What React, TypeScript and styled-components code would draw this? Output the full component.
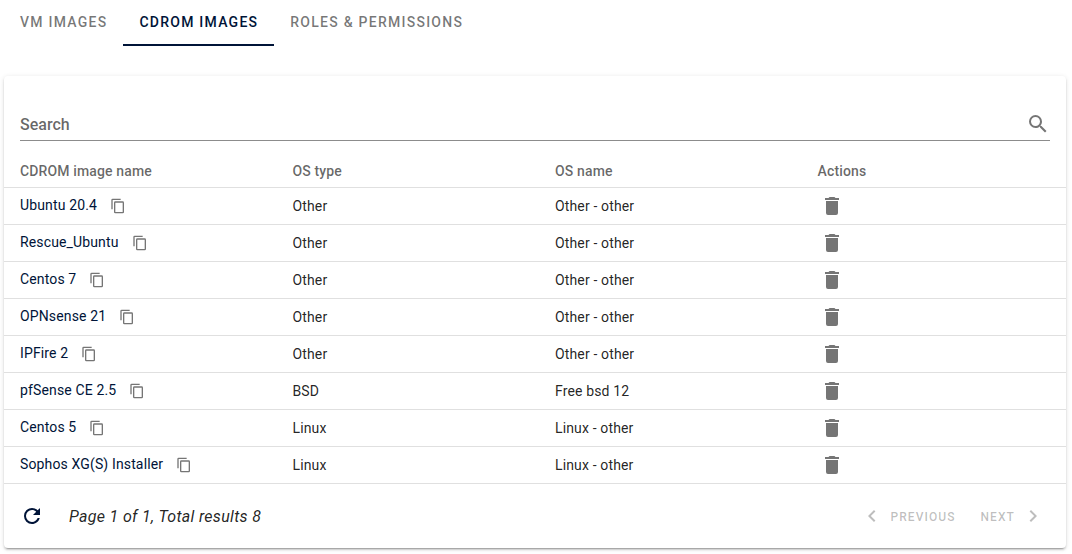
import React, { useState } from "react";
import styled, { createGlobalStyle } from "styled-components";

const navy = "#001438";
const muted = "rgba(0, 0, 0, 0.6)";
const iconGrey = "rgba(0, 0, 0, 0.54)";
const disabled = "rgba(0, 0, 0, 0.26)";

const GlobalStyle = createGlobalStyle`
  *, *::before, *::after { box-sizing: border-box; }
  body {
    margin: 0;
    background: #fff;
    color: rgba(0, 0, 0, 0.87);
    font-family: Roboto, "Liberation Sans", sans-serif;
    font-size: 14px;
    line-height: 20px;
  }
  button, input { font: inherit; color: inherit; }
`;

const paths = {
  search:
    "M9.5,3A6.5,6.5 0 0,1 16,9.5C16,11.11 15.41,12.59 14.44,13.73L14.71,14H15.5L20.5,19L19,20.5L14,15.5V14.71L13.73,14.44C12.59,15.41 11.11,16 9.5,16A6.5,6.5 0 0,1 3,9.5A6.5,6.5 0 0,1 9.5,3M9.5,5C7,5 5,7 5,9.5C5,12 7,14 9.5,14C12,14 14,12 14,9.5C14,7 12,5 9.5,5Z",
  copy: "M19,21H8V7H19M19,5H8A2,2 0 0,0 6,7V21A2,2 0 0,0 8,23H19A2,2 0 0,0 21,21V7A2,2 0 0,0 19,5M16,1H4A2,2 0 0,0 2,3V17H4V3H16V1Z",
  trash:
    "M19,4H15.5L14.5,3H9.5L8.5,4H5V6H19M6,19A2,2 0 0,0 8,21H16A2,2 0 0,0 18,19V7H6V19Z",
  refresh:
    "M17.65,6.35C16.2,4.9 14.21,4 12,4A8,8 0 0,0 4,12A8,8 0 0,0 12,20C15.73,20 18.84,17.45 19.73,14H17.65C16.83,16.33 14.61,18 12,18A6,6 0 0,1 6,12A6,6 0 0,1 12,6C13.66,6 15.14,6.69 16.22,7.78L13,11H20V4L17.65,6.35Z",
  left: "M15.41,16.58L10.83,12L15.41,7.41L14,6L8,12L14,18L15.41,16.58Z",
  right: "M8.59,16.58L13.17,12L8.59,7.41L10,6L16,12L10,18L8.59,16.58Z",
};

const Svg = styled.svg`
  display: block;
  flex: none;
  fill: currentColor;
`;

function Icon({ name, size = 24 }: { name: keyof typeof paths; size?: number }) {
  return (
    <Svg width={size} height={size} viewBox="0 0 24 24" aria-hidden="true">
      <path d={paths[name]} />
    </Svg>
  );
}

const Page = styled.main`
  padding: 0 6px 6px 4px;
`;

const Tabs = styled.div`
  display: flex;
`;

const Tab = styled.button<{ $active: boolean }>`
  height: 46px;
  padding: 0 16px;
  border: 0;
  border-bottom: 2px solid ${(p) => (p.$active ? navy : "transparent")};
  background: none;
  color: ${(p) => (p.$active ? navy : iconGrey)};
  font-weight: 500;
  letter-spacing: 0.089em;
  text-transform: uppercase;
  cursor: pointer;
`;

const Card = styled.section`
  margin-top: 30px;
  padding-top: 32px;
  border-radius: 4px;
  background: #fff;
  box-shadow: 0 3px 1px -2px rgba(0, 0, 0, 0.2), 0 2px 2px 0 rgba(0, 0, 0, 0.14),
    0 1px 5px 0 rgba(0, 0, 0, 0.12);
`;

const SearchBar = styled.label`
  display: flex;
  align-items: center;
  height: 33px;
  margin: 0 16px 14px;
  border-bottom: 1px solid #8c8c8c;
  color: ${iconGrey};
`;

const SearchInput = styled.input`
  flex: 1;
  min-width: 0;
  padding: 2px 0 0;
  border: 0;
  outline: 0;
  background: none;
  font-size: 16px;
  font-weight: 500;
  line-height: 24px;
  &::placeholder {
    color: ${muted};
    opacity: 1;
  }
`;

const Table = styled.table`
  width: 100%;
  table-layout: fixed;
  border-spacing: 0;
  letter-spacing: 0.01em;
`;

const HeadCell = styled.th<{ $width?: string }>`
  width: ${(p) => p.$width ?? "auto"};
  height: 33px;
  padding: 0 16px;
  border-bottom: 1px solid #e0e0e0;
  color: ${muted};
  font-weight: 500;
  text-align: left;
`;

const Cell = styled.td`
  height: 37px;
  padding: 0 16px;
  border-bottom: 1px solid #e0e0e0;
`;

const NameGroup = styled.div`
  display: flex;
  align-items: center;
  gap: 13px;
`;

const NameLink = styled.a`
  padding-bottom: 2px;
  color: ${navy};
  text-decoration: none;
`;

const IconButton = styled.button<{ $color?: string }>`
  display: flex;
  padding: 0;
  border: 0;
  background: none;
  color: ${(p) => p.$color ?? iconGrey};
  cursor: pointer;
`;

const Actions = styled.div`
  display: flex;
  padding-left: 2px;
`;

const Footer = styled.footer`
  display: flex;
  align-items: center;
  height: 64px;
  padding: 0 21px 0 16px;
`;

const Summary = styled.em`
  margin-left: 25px;
  padding-top: 2px;
  font-size: 16px;
  line-height: 24px;
  letter-spacing: 0.02em;
`;

const Pager = styled.nav`
  display: flex;
  gap: 25px;
  margin-left: auto;
`;

const PageButton = styled.button`
  display: flex;
  align-items: center;
  gap: 6px;
  padding: 0;
  border: 0;
  background: none;
  font-size: 12px;
  font-weight: 500;
  letter-spacing: 0.089em;
  text-transform: uppercase;
  &:disabled {
    color: ${disabled};
  }
`;

const PageLabel = styled.span`
  padding-top: 2px;
`;

const tabs = ["VM images", "CDROM images", "Roles & permissions"];

const images = [
  ["Ubuntu 20.4", "Other", "Other - other"],
  ["Rescue_Ubuntu", "Other", "Other - other"],
  ["Centos 7", "Other", "Other - other"],
  ["OPNsense 21", "Other", "Other - other"],
  ["IPFire 2", "Other", "Other - other"],
  ["pfSense CE 2.5", "BSD", "Free bsd 12"],
  ["Centos 5", "Linux", "Linux - other"],
  ["Sophos XG(S) Installer", "Linux", "Linux - other"],
];

export default function App() {
  const [active, setActive] = useState(1);
  const [query, setQuery] = useState("");
  const rows = images.filter(([name]) => name.toLowerCase().includes(query.toLowerCase()));

  return (
    <>
      <GlobalStyle />
      <Page>
        <Tabs role="tablist">
          {tabs.map((label, i) => (
            <Tab
              key={label}
              type="button"
              role="tab"
              aria-selected={i === active}
              $active={i === active}
              onClick={() => setActive(i)}
            >
              {label}
            </Tab>
          ))}
        </Tabs>
        <Card>
          <SearchBar>
            <SearchInput
              type="text"
              placeholder="Search"
              aria-label="Search"
              value={query}
              onChange={(e) => setQuery(e.target.value)}
            />
            <Icon name="search" />
          </SearchBar>
          <Table>
            <thead>
              <tr>
                <HeadCell $width="25.66%">CDROM image name</HeadCell>
                <HeadCell $width="24.72%">OS type</HeadCell>
                <HeadCell $width="24.72%">OS name</HeadCell>
                <HeadCell>Actions</HeadCell>
              </tr>
            </thead>
            <tbody>
              {rows.map(([name, type, os]) => (
                <tr key={name}>
                  <Cell>
                    <NameGroup>
                      <NameLink href="#">{name}</NameLink>
                      <IconButton type="button" aria-label={`Copy ${name}`}>
                        <Icon name="copy" size={16} />
                      </IconButton>
                    </NameGroup>
                  </Cell>
                  <Cell>{type}</Cell>
                  <Cell>{os}</Cell>
                  <Cell>
                    <Actions>
                      <IconButton type="button" aria-label={`Delete ${name}`}>
                        <Icon name="trash" />
                      </IconButton>
                    </Actions>
                  </Cell>
                </tr>
              ))}
            </tbody>
          </Table>
          <Footer>
            <IconButton type="button" aria-label="Refresh" $color={navy}>
              <Icon name="refresh" />
            </IconButton>
            <Summary>Page 1 of 1, Total results {rows.length}</Summary>
            <Pager aria-label="Pagination">
              <PageButton type="button" disabled>
                <Icon name="left" />
                <PageLabel>Previous</PageLabel>
              </PageButton>
              <PageButton type="button" disabled>
                <PageLabel>Next</PageLabel>
                <Icon name="right" />
              </PageButton>
            </Pager>
          </Footer>
        </Card>
      </Page>
    </>
  );
}
